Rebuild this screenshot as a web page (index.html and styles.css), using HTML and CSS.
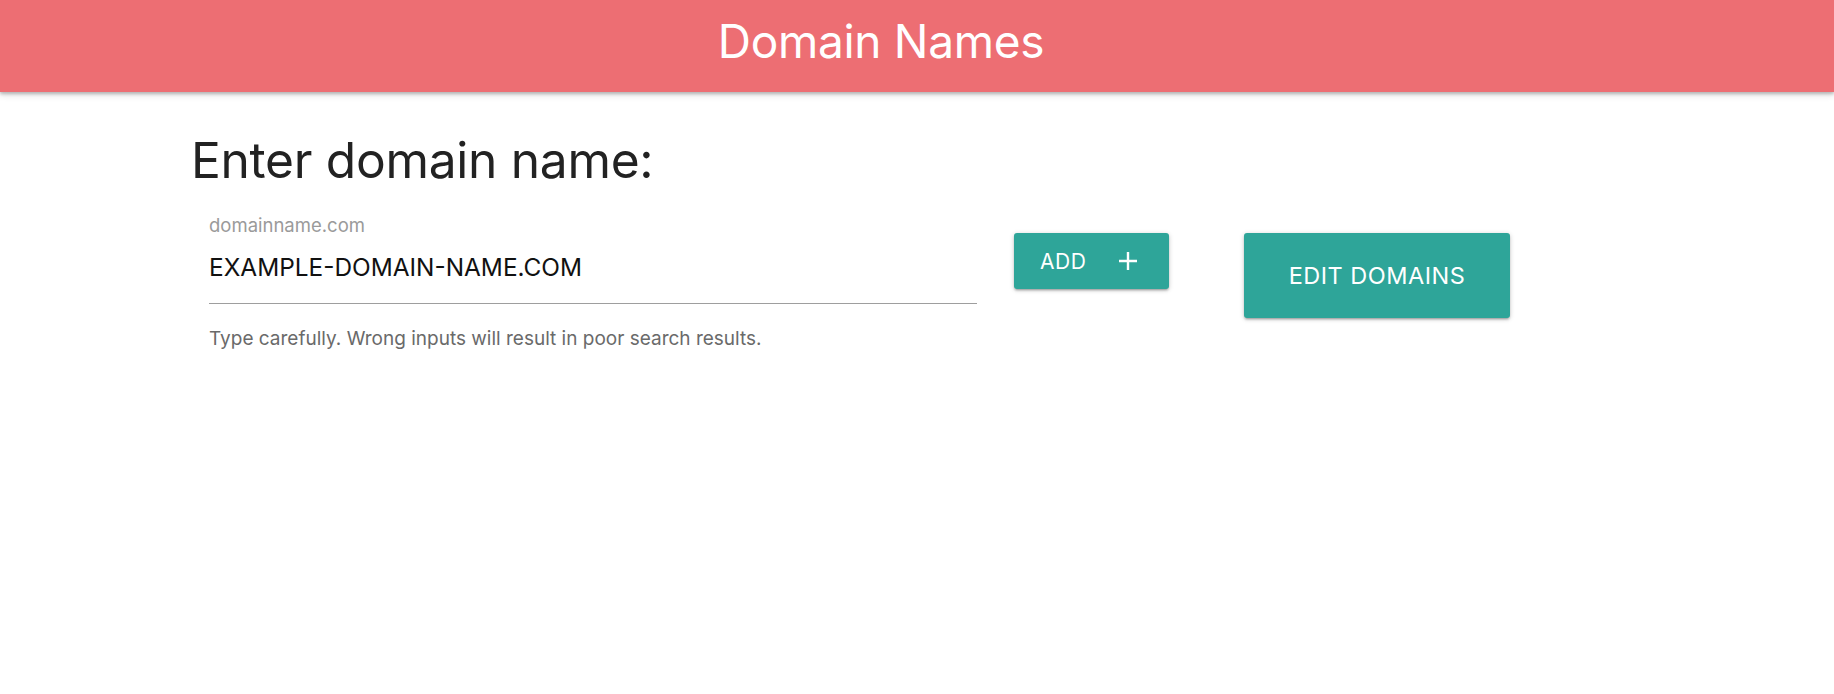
FILE: index.html
```html
<!DOCTYPE html>
<html lang="en">
<head>
<meta charset="utf-8">
<title>Domain Names</title>
<link rel="stylesheet" href="styles.css">
</head>
<body>
<header class="nav">
  <div class="brand">Domain Names</div>
</header>
<main class="page">
  <h1 class="heading">Enter domain name:</h1>
  <div class="row">
    <div class="field">
      <label class="label">domainname.com</label>
      <div class="value">EXAMPLE-DOMAIN-NAME.COM</div>
      <div class="helper">Type carefully. Wrong inputs will result in poor search results.</div>
    </div>
    <button class="btn btn-add">ADD
      <svg class="plus" width="20" height="20" viewBox="0 0 20 20"><path d="M10 1v18M1 10h18" stroke="#fff" stroke-width="2.4" fill="none"/></svg>
    </button>
    <button class="btn btn-edit">EDIT DOMAINS</button>
  </div>
</main>
</body>
</html>
```
FILE: styles.css
```css
html, body {
  margin: 0;
  padding: 0;
  background: #fff;
  font-family: Inter, "Noto Sans", sans-serif;
}
.nav {
  height: 92px;
  background: #ed6e73;
  box-shadow: 0 2px 3px rgba(0,0,0,0.22), 0 3px 7px rgba(0,0,0,0.12);
  display: flex;
  justify-content: center;
  padding-right: 72px;
}
.brand {
  color: #fff;
  font-size: 46px;
  line-height: 82px;
  font-weight: 400;
  letter-spacing: -0.3px;
}
.page {
  padding-left: 191px;
}
.heading {
  margin: 0;
  padding-top: 33px;
  font-size: 49.7px;
  font-weight: 400;
  line-height: 70px;
  color: #222;
  letter-spacing: -0.3px;
}
.row {
  display: flex;
  align-items: flex-start;
  margin-top: 17px;
}
.field {
  width: 768px;
  margin-left: 18px;
  display: flex;
  flex-direction: column;
}
.label {
  font-size: 18.5px;
  color: #9a9a9a;
  line-height: 26px;
}
.value {
  font-size: 24.4px;
  color: #111;
  line-height: 30px;
  margin-top: 14px;
  padding-bottom: 21px;
  border-bottom: 1.5px solid #9e9e9e;
}
.helper {
  font-size: 19px;
  color: #6a6a6a;
  line-height: 24px;
  margin-top: 23px;
}
.btn {
  border: none;
  border-radius: 3px;
  background: #2ea599;
  color: #fff;
  font-family: Inter, "Noto Sans", sans-serif;
  font-weight: 400;
  box-shadow: 0 2px 2px rgba(0,0,0,0.14), 0 3px 1px -2px rgba(0,0,0,0.12), 0 1px 5px rgba(0,0,0,0.2);
  display: flex;
  align-items: center;
  letter-spacing: 0.5px;
  padding: 0;
}
.btn-add {
  margin-top: 21px;
  margin-left: 37px;
  width: 155px;
  height: 56px;
  font-size: 21px;
  padding-left: 26px;
  gap: 32px;
}
.plus {
  display: block;
}
.btn-edit {
  margin-top: 21px;
  margin-left: 75px;
  width: 266px;
  height: 85px;
  font-size: 23.5px;
  justify-content: center;
}
```
